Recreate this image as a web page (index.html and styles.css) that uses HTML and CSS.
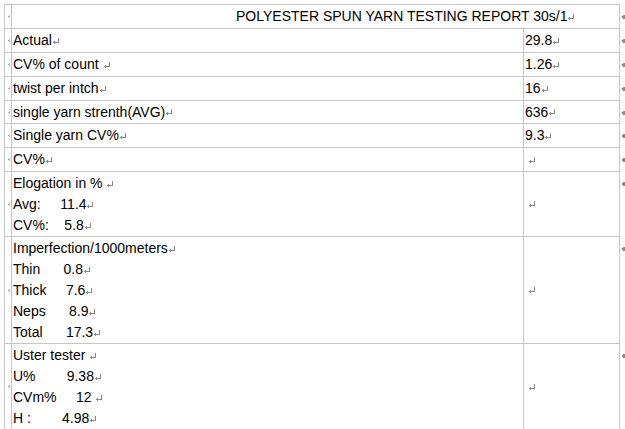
FILE: index.html
```html
<!DOCTYPE html>
<html>
<head>
<meta charset="utf-8">
<link rel="stylesheet" href="styles.css">
<title>Polyester spun yarn testing report</title>
</head>
<body>
<div class="sheet">
  <!-- row 1 -->
  <div class="c edge top r0"><i class="lm"></i></div>
  <div class="c txt top title span2 r0">POLYESTER SPUN YARN TESTING REPORT 30s/1<i class="pm"></i></div>
  <div class="m r0"><i class="rm"></i></div>

  <div class="c edge r1"><i class="lm"></i></div>
  <div class="c txt r1">Actual<i class="pm"></i></div>
  <div class="c val r1">29.8<i class="pm"></i></div>
  <div class="m r1"><i class="rm"></i></div>

  <div class="c edge r1"><i class="lm"></i></div>
  <div class="c txt r1">CV% of count <i class="pm"></i></div>
  <div class="c val r1">1.26<i class="pm"></i></div>
  <div class="m r1"><i class="rm"></i></div>

  <div class="c edge r1"><i class="lm"></i></div>
  <div class="c txt r1">twist per intch<i class="pm"></i></div>
  <div class="c val r1">16<i class="pm"></i></div>
  <div class="m r1"><i class="rm"></i></div>

  <div class="c edge r1s"><i class="lm"></i></div>
  <div class="c txt r1s">single yarn strenth(AVG)<i class="pm"></i></div>
  <div class="c val r1s">636<i class="pm"></i></div>
  <div class="m r1s"><i class="rm"></i></div>

  <div class="c edge r1"><i class="lm"></i></div>
  <div class="c txt r1">Single yarn CV%<i class="pm"></i></div>
  <div class="c val r1">9.3<i class="pm"></i></div>
  <div class="m r1"><i class="rm"></i></div>

  <div class="c edge r1"><i class="lm"></i></div>
  <div class="c txt r1">CV%<i class="pm"></i></div>
  <div class="c val empty r1"><i class="pm"></i></div>
  <div class="m r1"><i class="rm"></i></div>

  <div class="c edge rb"><i class="lm"></i></div>
  <div class="c txt multi rb">
    <div class="ln">Elogation in % <i class="pm"></i></div>
    <div class="ln">Avg:     11.4<i class="pm"></i></div>
    <div class="ln">CV%:    5.8<i class="pm"></i></div>
  </div>
  <div class="c val empty rb"><i class="pm"></i></div>
  <div class="m mtop rb"><i class="rm"></i></div>

  <div class="c edge rc"><i class="lm"></i></div>
  <div class="c txt multi rc">
    <div class="ln">Imperfection/1000meters<i class="pm"></i></div>
    <div class="ln">Thin      0.8<i class="pm"></i></div>
    <div class="ln">Thick     7.6<i class="pm"></i></div>
    <div class="ln">Neps      8.9<i class="pm"></i></div>
    <div class="ln">Total      17.3<i class="pm"></i></div>
  </div>
  <div class="c val empty rc"><i class="pm"></i></div>
  <div class="m mtop rc"><i class="rm"></i></div>

  <div class="c edge rd"><i class="lm"></i></div>
  <div class="c txt multi rd">
    <div class="ln">Uster tester <i class="pm"></i></div>
    <div class="ln">U%        9.38<i class="pm"></i></div>
    <div class="ln">CVm%     12 <i class="pm"></i></div>
    <div class="ln">H :        4.98<i class="pm"></i></div>
  </div>
  <div class="c val empty rd"><i class="pm"></i></div>
  <div class="m mtop rd"><i class="rm"></i></div>
</div>
</body>
</html>
```

FILE: styles.css
```css
html, body {
  margin: 0;
  padding: 0;
  background: #ffffff;
  overflow: hidden;
}

body {
  font-family: "Liberation Sans", Arial, sans-serif;
  font-size: 14px;
  color: #000;
}

.sheet {
  margin: 4px 0 0 4px;
  display: grid;
  grid-template-columns: 8px 512px 96px 8px;
  grid-auto-rows: auto;
}

.c {
  box-sizing: border-box;
  border-right: 1px solid #c6c6c6;
  border-bottom: 1px solid #c6c6c6;
  display: flex;
  align-items: center;
  white-space: pre;
  line-height: 21px;
}

.c.top { border-top: 1px solid #c6c6c6; }

.edge {
  border-left: 1px solid #c6c6c6;
  justify-content: flex-end;
}

.txt { padding-left: 1px; }
.val { padding-left: 1px; }
.val.empty { padding-left: 4px; }

.span2 { grid-column: 2 / 4; }
.title { padding-left: 224px; }

.r0 { height: 25px; }
.r1 { height: 24px; }
.r1s { height: 23px; }
.rb { height: 65px; }
.rc { height: 107px; }
.rd { height: 86px; }

.multi {
  flex-direction: column;
  align-items: stretch;
  justify-content: flex-start;
  padding-top: 1px;
}

.ln {
  height: 21px;
  line-height: 21px;
  display: flex;
  align-items: center;
}

.m {
  box-sizing: border-box;
  display: flex;
  align-items: center;
  padding-left: 2px;
}
.m.r0 { padding-top: 1px; }
.m.mtop {
  align-items: flex-start;
  padding-top: 10px;
}

/* paragraph return mark */
.pm {
  display: inline-block;
  width: 7px;
  height: 7px;
  margin-left: 1px;
  margin-top: 1px;
  background:
    linear-gradient(#8a8a8a, #8a8a8a) 5px 0 / 1px 5px no-repeat,
    linear-gradient(#8a8a8a, #8a8a8a) 1px 4px / 5px 1px no-repeat,
    linear-gradient(#8a8a8a, #8a8a8a) 1px 3px / 1px 3px no-repeat,
    linear-gradient(#8a8a8a, #8a8a8a) 0 4px / 1px 1px no-repeat;
}

/* left row marker */
.lm {
  display: inline-block;
  width: 2px;
  height: 3px;
  margin-right: 1px;
  background:
    linear-gradient(#9a9a9a, #9a9a9a) 0 1px / 1px 1px no-repeat,
    linear-gradient(#c0c0c0, #c0c0c0) 1px 0 / 1px 3px no-repeat;
}

/* right end-of-row marker */
.rm {
  display: inline-block;
  width: 4px;
  height: 4px;
  background:
    linear-gradient(#8a8a8a, #8a8a8a) 0 1px / 4px 2px no-repeat,
    linear-gradient(#8a8a8a, #8a8a8a) 1px 0 / 2px 4px no-repeat;
}
```
